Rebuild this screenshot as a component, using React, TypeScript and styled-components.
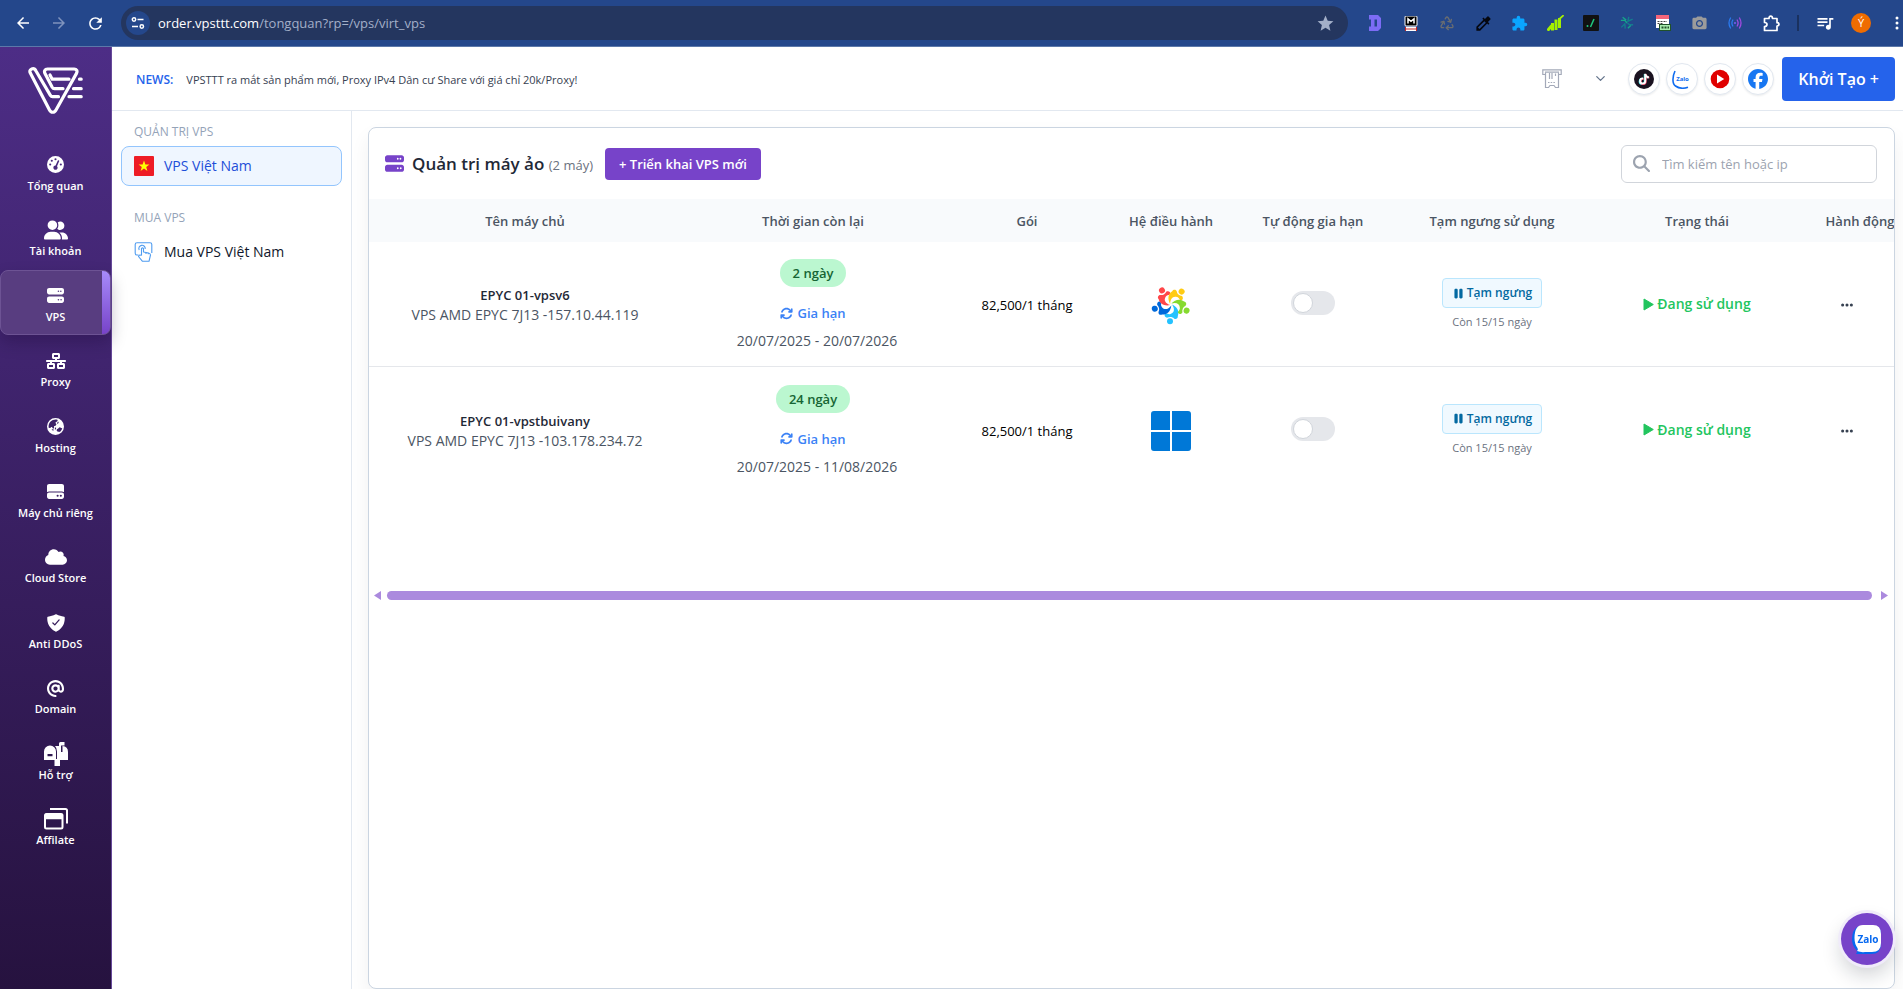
import React from "react";
import styled, { createGlobalStyle, css } from "styled-components";
import {
  FaGaugeHigh,
  FaUserGroup,
  FaServer,
  FaNetworkWired,
  FaEarthAsia,
  FaHardDrive,
  FaCloud,
  FaAt,
  FaArrowsRotate,
  FaPause,
  FaMagnifyingGlass,
  FaFacebook,
  FaTiktok,
  FaEllipsis,
} from "react-icons/fa6";
import { IoShieldCheckmark } from "react-icons/io5";
import {
  MdArrowBack,
  MdArrowForward,
  MdRefresh,
  MdStar,
  MdExtension,
  MdQueueMusic,
  MdPhotoCamera,
  MdColorize,
} from "react-icons/md";
import { LuChevronDown, LuRecycle } from "react-icons/lu";

const GlobalStyle = createGlobalStyle`
  *, *::before, *::after { box-sizing: border-box; }
  body {
    margin: 0;
    background: #fff;
    color: #1f2937;
    font-family: "Open Sans", "Noto Sans", sans-serif;
    font-size: 13px;
    line-height: 20px;
  }
  button, input { font: inherit; color: inherit; }
  button { border: 0; padding: 0; background: none; cursor: pointer; }
  a { color: inherit; text-decoration: none; }
  svg { display: block; flex: none; }
`;

const Page = styled.div`
  min-height: 100vh;
  display: flex;
  flex-direction: column;
`;

/* Browser bar */

const BrowserBar = styled.div`
  height: 47px;
  display: flex;
  align-items: center;
  background: #24478b;
  border-bottom: 1px solid #5c78a9;
  overflow: hidden;
`;

const BrowserButton = styled.button<{ $dim?: boolean }>`
  width: 36px;
  height: 34px;
  flex: none;
  display: grid;
  place-items: center;
  color: ${(p) => (p.$dim ? "#7f93bd" : "#fff")};
`;

const BrowserNav = styled.div`
  display: flex;
  padding: 0 8px 0 5px;
`;

const Omnibox = styled.div`
  flex: 1;
  min-width: 0;
  height: 34px;
  padding: 0 13px 0 5px;
  display: flex;
  align-items: center;
  gap: 8px;
  border-radius: 17px;
  background: #24365f;
  color: #a3afc8;
`;

const SiteInfo = styled.button`
  width: 24px;
  height: 24px;
  display: grid;
  place-items: center;
  border-radius: 50%;
  background: #24478b;
  color: #fff;
`;

const Url = styled.span`
  flex: 1;
  font-size: 13px;
  white-space: nowrap;
  overflow: hidden;
  b {
    font-weight: 400;
    color: #fff;
  }
`;

const Extensions = styled.div`
  display: flex;
  align-items: center;
  padding-left: 9px;
`;

const BarDivider = styled.span`
  width: 2px;
  height: 16px;
  margin: 0 8px;
  background: #1a315f;
`;

const Avatar = styled.span`
  width: 20px;
  height: 20px;
  border-radius: 50%;
  background: #ef6c00;
  color: #fff;
  font-size: 11px;
  line-height: 20px;
  text-align: center;
`;

const MenuDots = styled(BrowserButton)`
  width: 24px;
  padding-right: 4px;
  place-items: center end;
`;

/* Layout */

const Shell = styled.div`
  flex: 1;
  display: flex;
`;

const Sidebar = styled.aside`
  width: 112px;
  flex: none;
  border-right: 1px solid #67499a;
  background: linear-gradient(#4d2d86, #26123f);
`;

const Brand = styled.a`
  height: 92px;
  padding: 20px 0 0 28px;
  display: block;
`;

const PrimaryNav = styled.nav`
  height: 720px;
  display: flex;
  flex-direction: column;
`;

const PrimaryLink = styled.a<{ $active?: boolean }>`
  flex: 1;
  padding-top: 2px;
  display: flex;
  flex-direction: column;
  align-items: center;
  justify-content: center;
  border: 1px solid transparent;
  color: #fff;
  font-size: 11px;
  font-weight: 600;
  line-height: 16px;
  white-space: nowrap;
  ${(p) =>
    p.$active &&
    css`
      border-color: #6d5394;
      border-radius: 8px;
      box-shadow: 0 8px 16px rgba(20, 5, 40, 0.25);
      background: linear-gradient(#a78bfa, #7743c9) right / 8px 100% no-repeat, #583d80;
    `}
`;

const IconSlot = styled.span`
  height: 26px;
  display: grid;
  place-items: center;
`;

const Workspace = styled.div`
  flex: 1;
  min-width: 0;
  display: flex;
  flex-direction: column;
`;

/* Top header */

const TopHeader = styled.header`
  height: 64px;
  padding: 0 8px 0 24px;
  display: flex;
  align-items: center;
  border-bottom: 1px solid #e2e8f0;
`;

const News = styled.p`
  flex: 1;
  margin: 0;
  padding-top: 2px;
  display: flex;
  gap: 13px;
  font-size: 11px;
  color: #374151;
  white-space: nowrap;
  strong {
    font-size: 12px;
    font-weight: 600;
    color: #2563eb;
  }
`;

const HeaderIcon = styled.button`
  width: 48px;
  height: 32px;
  display: grid;
  place-items: center;
  color: #64748b;
`;

const Socials = styled.div`
  display: flex;
  gap: 6px;
  padding: 0 8px 0 4px;
`;

const Social = styled.a`
  width: 32px;
  height: 32px;
  display: grid;
  place-items: center;
  border: 1px solid #e2e8f0;
  border-radius: 50%;
  background: #fff;
  box-shadow: 0 1px 2px rgba(15, 23, 42, 0.08);
`;

const CreateButton = styled.button`
  height: 44px;
  padding: 0 16px;
  border-radius: 4px;
  background: #2563eb;
  color: #fff;
  font-size: 16px;
  font-weight: 600;
  white-space: nowrap;
`;

const Body = styled.div`
  flex: 1;
  display: flex;
`;

/* Secondary menu */

const SubMenu = styled.nav`
  width: 240px;
  flex: none;
  padding: 11px 9px 0;
  display: flex;
  flex-direction: column;
  gap: 22px;
  border-right: 1px solid #e2e8f0;
`;

const SubTitle = styled.h2`
  margin: 0 0 4px;
  padding-left: 13px;
  font-size: 12px;
  font-weight: 400;
  line-height: 20px;
  color: #94a3b8;
`;

const SubLink = styled.a<{ $active?: boolean }>`
  height: 40px;
  padding: 0 12px;
  display: flex;
  align-items: center;
  gap: 10px;
  border: 1px solid ${(p) => (p.$active ? "#93c5fd" : "transparent")};
  border-radius: 8px;
  background: ${(p) => (p.$active ? "#eff6ff" : "transparent")};
  color: ${(p) => (p.$active ? "#1d4ed8" : "#0f172a")};
  font-size: 14px;
`;

/* Machines card */

const Main = styled.main`
  flex: 1;
  min-width: 0;
  padding: 16px 8px 0 16px;
  display: flex;
  overflow: hidden;
`;

const Card = styled.section`
  flex: 1;
  min-width: 0;
  border: 1px solid #cbd5e1;
  border-radius: 8px;
  background: #fff;
  box-shadow: 0 10px 20px rgba(15, 23, 42, 0.06);
  overflow: hidden;
`;

const CardHeader = styled.div`
  height: 71px;
  padding: 0 17px 0 16px;
  display: flex;
  align-items: center;
  gap: 8px;
`;

const CardTitle = styled.h1`
  margin: 0;
  padding-top: 2px;
  font-size: 17px;
  font-weight: 600;
  line-height: 24px;
  color: #1f2937;
  white-space: nowrap;
  small {
    font-size: 13px;
    font-weight: 400;
    color: #6b7280;
  }
`;

const DeployButton = styled.button`
  height: 32px;
  margin: 0 auto 0 4px;
  padding: 0 14px;
  border-radius: 4px;
  background: #7743c9;
  color: #fff;
  font-size: 13px;
  font-weight: 600;
  white-space: nowrap;
`;

const SearchBox = styled.label`
  width: 256px;
  height: 38px;
  padding: 0 11px;
  display: flex;
  align-items: center;
  gap: 12px;
  border: 1px solid #d1d5db;
  border-radius: 6px;
  color: #9ca3af;
  input {
    width: 100%;
    min-width: 0;
    padding: 0;
    border: 0;
    outline: 0;
    background: none;
    color: #1f2937;
    font-size: 13px;
  }
  input::placeholder {
    color: #9ca3af;
    opacity: 1;
  }
`;

const TableScroller = styled.div`
  min-height: 392px;
  overflow: hidden;
`;

const Table = styled.table`
  width: 100%;
  min-width: 1548px;
  table-layout: fixed;
  border-spacing: 0;
  text-align: center;
`;

const HeadCell = styled.th<{ $w: number }>`
  width: ${(p) => p.$w}px;
  height: 43px;
  padding: 0;
  background: #f8fafc;
  color: #4b5563;
  font-weight: 600;
  white-space: nowrap;
`;

const Cell = styled.td`
  padding: 2px 0 0;
  vertical-align: middle;
  white-space: nowrap;
`;

const Row = styled.tr`
  height: 125px;
  &:not(:last-child) > ${Cell} {
    border-bottom: 1px solid #e5e7eb;
  }
`;

const Stack = styled.div`
  display: flex;
  flex-direction: column;
  align-items: center;
`;

const HostName = styled.span`
  font-weight: 600;
  color: #1f2937;
`;

const Muted = styled.span`
  font-size: 14px;
  color: #4b5563;
`;

const DaysPill = styled.span`
  height: 28px;
  padding: 0 13px;
  border-radius: 14px;
  background: #bbf7d0;
  color: #166534;
  font-weight: 600;
  line-height: 28px;
`;

const RenewButton = styled.button`
  margin: 16px 0 8px;
  display: flex;
  align-items: center;
  gap: 4px;
  color: #3b82f6;
  font-weight: 600;
`;

const Period = styled(Muted)`
  padding-left: 8px;
`;

const PlanPrice = styled.span`
  color: #000;
`;

const Centered = styled.div`
  display: flex;
  justify-content: center;
`;

const Switch = styled.input`
  appearance: none;
  width: 44px;
  height: 24px;
  margin: 0 0 4px;
  padding: 2px;
  border-radius: 12px;
  background: #e5e7eb;
  cursor: pointer;
  &::before {
    content: "";
    display: block;
    width: 20px;
    height: 20px;
    border: 1px solid #d1d5db;
    border-radius: 50%;
    background: #fff;
  }
  &:checked {
    background: #7743c9;
  }
  &:checked::before {
    margin-left: auto;
  }
`;

const SuspendButton = styled.button`
  height: 30px;
  margin-bottom: 4px;
  padding: 0 9px;
  display: flex;
  align-items: center;
  gap: 2px;
  border: 1px solid #bae6fd;
  border-radius: 4px;
  background: #f0f9ff;
  color: #0369a1;
  font-size: 12px;
  font-weight: 600;
`;

const Remaining = styled.span`
  font-size: 11px;
  color: #6b7280;
`;

const Status = styled.span`
  display: inline-flex;
  align-items: center;
  gap: 3px;
  color: #22c55e;
  font-size: 14px;
  font-weight: 600;
`;

const ActionButton = styled.button`
  margin-right: 26px;
  padding: 4px;
  color: #374151;
`;

const ScrollRail = styled.div`
  height: 9px;
  padding: 0 6px 0 5px;
  display: flex;
  align-items: center;
  gap: 6px;
  color: #ab8ade;
`;

const ScrollThumb = styled.span`
  flex: 1;
  height: 9px;
  margin-right: 3px;
  border-radius: 5px;
  background: #ab8ade;
`;

const ChatButton = styled.button`
  position: fixed;
  right: 10px;
  bottom: 24px;
  width: 52px;
  height: 52px;
  display: grid;
  place-items: center;
  border-radius: 50%;
  background: #7743c9;
  box-shadow: 0 0 0 3px #f0ebfa, 0 10px 20px rgba(15, 23, 42, 0.2);
`;

/* Drawings */

const BrandMark = () => (
  <svg width="56" height="48" viewBox="0 0 56 48" fill="none" stroke="#fff" strokeWidth="3.200" strokeLinecap="round" strokeLinejoin="round">
    <path d="M30.500 29.700H24.500Q23.200 29.700 22.400 28.400L8 4C6-.2.500 2 2.200 5.800L21.500 43C23 46 26.500 46 28 43L48.500 6.400C49.700 4 48.600 2 46.200 2H19.500C16.800 2 15.800 4.200 17 6.500L24.200 20.300Q25 21.700 26.500 21.700H35" />
    <path d="M22 8L24.200 12.200H41" />
    <path d="M51.500 12.200H53.200M45.500 21.700H53.200M41 29.700H53.200" />
  </svg>
);

const MailboxIcon = () => (
  <svg width="24" height="24" viewBox="0 0 24 24" fill="#fff">
    <path fillRule="evenodd" d="M0 18V9.500A6 6 0 0 1 12 9.500V18ZM3.500 12V14.300H8.500V12Z" />
    <path d="M13 18V9.500Q13 6 11 4H15V1.500Q15 0 16.500 0H20.500V3.500H17V10H18.500V4Q24 4.500 24 10V18Z" />
    <path d="M10.500 17H16V24H10.500Z" />
  </svg>
);

const WindowsStack = () => (
  <svg width="24" height="22" viewBox="0 0 24 22" fill="none" stroke="#fff" strokeWidth="2">
    <path d="M6 1H21.500Q23 1 23 2.500V15.500" />
    <rect x="1" y="6" width="17.500" height="14.500" rx="1.500" />
    <path d="M1 8.500H18.500" strokeWidth="5.500" />
  </svg>
);

const TuneIcon = () => (
  <svg width="14" height="14" viewBox="0 0 14 14" fill="none" stroke="currentColor" strokeWidth="1.500">
    <circle cx="3" cy="3.500" r="1.700" />
    <path d="M6.500 3.500H12.500M1 10.500H7" />
    <circle cx="10.800" cy="10.500" r="1.700" />
  </svg>
);

const LetterD = () => (
  <svg width="12" height="16" viewBox="0 0 12 16">
    <path fill="#7c6cf5" fillRule="evenodd" d="M0 0H9L12 3V13L9 16H0V11.500H2V4.500H0ZM5.500 4.500V11.500H8V4.500Z" />
  </svg>
);

const LetterM = () => (
  <svg width="14" height="15" viewBox="0 0 14 15">
    <rect x="1" width="12" height="10" rx="1" fill="#000" stroke="#fff" />
    <path d="M4 7.500V2.800L7 5.300L10 2.800V7.500" fill="none" stroke="#fff" strokeWidth="1.500" />
    <rect x="1" y="11" width="12" height="4" fill="#fff" />
    <path d="M1.500 11V15M12.500 11V15M1.500 13H12.500" stroke="#c62828" />
  </svg>
);

const GreenBars = () => (
  <svg width="17" height="16" viewBox="0 0 17 16" fill="none" stroke="#a4f000" strokeLinecap="square">
    <path d="M1.500 14.500L4 11.500M5.500 14V9.500M9 13.500V6M12.500 11.500V4.500" strokeWidth="3" />
    <path d="M13 3.500L16 .8" strokeWidth="1.800" />
  </svg>
);

const DotSlash = () => (
  <svg width="16" height="16" viewBox="0 0 16 16">
    <rect width="16" height="16" rx="1" fill="#111" />
    <circle cx="4.500" cy="11" r="1" fill="#1fc77e" />
    <path d="M7.500 12L11 4" stroke="#1fc77e" strokeWidth="1.500" />
  </svg>
);

const Pinwheel = () => (
  <svg width="14" height="14" viewBox="0 0 16 16" fill="none" strokeWidth="1.600">
    <path stroke="#16a58a" d="M3 1.500L7 4.500M1 5H5.500L8 8M9 14L12.500 10.500" />
    <path stroke="#147c8f" d="M10 1L9 6L14.500 3.500M1.500 13L5.500 9L6 14.500M15 10H11L8.500 8" />
  </svg>
);

const CssSheet = () => (
  <svg width="16" height="16" viewBox="0 0 16 16">
    <rect x="1" width="13" height="13" fill="#fff" />
    <rect x="1" width="13" height="4" fill="#f4657a" />
    <path d="M2.500 6.500H12M2.500 8.500H8" stroke="#444" strokeDasharray="2 1" />
    <rect x="4.500" y="9.500" width="11" height="6" fill="#a9ecb0" stroke="#20512a" />
    <path d="M6.500 12.500H14" stroke="#20512a" strokeWidth="2" strokeDasharray="2 1" />
  </svg>
);

const Broadcast = () => (
  <svg width="14" height="12" viewBox="0 0 14 12" fill="none" strokeWidth="1.300" strokeLinecap="round">
    <path stroke="#2b7bf0" d="M2.500 1Q-.5 6 2.500 11M4.800 3Q3 6 4.800 9" />
    <path stroke="#a04be0" d="M11.500 1Q14.500 6 11.500 11M9.200 3Q11 6 9.200 9" />
    <circle cx="7" cy="6" r="1" fill="#7a5cf0" />
  </svg>
);

const PuzzleOutline = () => (
  <svg width="17" height="17" viewBox="0 0 17 17" fill="none" stroke="#fff" strokeWidth="1.700" strokeLinejoin="round">
    <path d="M1.500 3.500H6Q6 1.200 7.700 1.200T9.500 3.500H14V7.700Q16 7.700 16 9.300T14 11V15.500H1.500V11.500Q4 11.500 4 9.500T1.500 7.500Z" />
  </svg>
);

const VerticalDots = () => (
  <svg width="4" height="14" viewBox="0 0 4 14" fill="#fff">
    <circle cx="2" cy="2" r="1.500" />
    <circle cx="2" cy="7" r="1.500" />
    <circle cx="2" cy="12" r="1.500" />
  </svg>
);

const TicketIcon = () => (
  <svg width="20" height="20" viewBox="0 0 20 20" fill="none" stroke="#a3a9b8" strokeWidth="1.200">
    <path d="M3 5.500H.8V.8H19.200V5.500H17M3 3.200H17" />
    <path d="M3.500 3.500V18.500H6.500L8 16.500H12L13.500 18.500H16.500V3.500" />
    <path d="M7.500 4V10M10 4V10M13.500 4.500V7" />
    <path d="M6 13.500H14" strokeDasharray="1.500 1.200" />
  </svg>
);

const FlagIcon = () => (
  <svg width="20" height="20" viewBox="0 0 20 20">
    <rect width="20" height="20" rx="1" fill="#ee1c25" />
    <path fill="#ff0" d="M10 4.600L11.400 8.500H15.400L12.200 11L13.400 15L10 12.600L6.600 15L7.800 11L4.600 8.500H8.600Z" />
  </svg>
);

const TapIcon = () => (
  <svg width="20" height="20" viewBox="0 0 20 20" fill="none" stroke="#4f9cf0" strokeWidth="1.100" strokeLinejoin="round">
    <path d="M4.500 13H3Q1.200 13 1.200 11.200V2.500Q1.200 .8 3 .8H16Q17.800 .8 17.800 2.500V11" />
    <path d="M5.200 8A3.200 3.200 0 1 1 11.200 7" />
    <path d="M7.500 13.500V6.500Q8.500 5.200 9.500 6.500V10L14.500 11Q16.500 11.500 16.500 13L15 19.300H8.500L4.500 14.500Q5.500 12 7.500 13.500" />
    <path d="M12 10.500V12M14.300 11V12.300" />
  </svg>
);

const PlayIcon = () => (
  <svg width="11" height="13" viewBox="0 0 11 13" fill="currentColor" stroke="currentColor" strokeLinejoin="round">
    <path d="M1 1L10.300 6.500L1 12Z" />
  </svg>
);

const TikTokMark = () => (
  <svg width="20" height="20" viewBox="0 0 20 20">
    <circle cx="10" cy="10" r="10" fill="#1a1220" />
    <g transform="translate(4 5)">
      <FaTiktok size={11} color="#25f4ee" />
    </g>
    <g transform="translate(5 5)">
      <FaTiktok size={11} color="#fe5577" />
    </g>
    <g transform="translate(4.500 4.500)">
      <FaTiktok size={11} color="#fff" />
    </g>
  </svg>
);

const ZaloMark = () => (
  <svg width="20" height="20" viewBox="0 0 20 20">
    <path d="M3 2C.6 7-.2 14.500 3.500 17C7 19.500 12 19.600 16 18.200" fill="none" stroke="#0f6cf0" strokeWidth="1.600" />
    <text x="10.500" y="12" fontSize="6" fontWeight="700" textAnchor="middle" fill="#0f6cf0">Zalo</text>
  </svg>
);

const YouTubeMark = () => (
  <svg width="20" height="20" viewBox="0 0 20 20">
    <circle cx="10" cy="10" r="9.300" fill="#e00000" />
    <path d="M7 5.500L14.200 10L7 14.500Z" fill="#fff" />
  </svg>
);

const ZaloBubble = () => (
  <svg width="32" height="32" viewBox="0 0 32 32">
    <path d="M8 3H22Q30 3 30 11V21Q30 31 20 31H5Q7 29 5.500 27Q1 23 1 16Q1 6 8 3Z" fill="#0668f0" />
    <path d="M12 2H22Q30 2 30 11V20Q30 29 21 29H14Q10 29.500 6 28Q7.500 27 6.500 25Q3.500 21 3.500 15Q3.500 2 12 2Z" fill="#fff" />
    <text x="17" y="20" fontSize="10" fontWeight="700" textAnchor="middle" fill="#0668f0">Zalo</text>
  </svg>
);

const AlmaMark = () => (
  <svg width="40" height="40" viewBox="-20 -19.500 40 40" role="img" aria-label="AlmaLinux">
    {["#24c2ff", "#0069da", "#ff4649", "#ffcb12", "#86da2f"].map((color, i) => (
      <g key={color} fill={color} transform={`rotate(${i * 72})`}>
        <circle cx="-1" cy="16.700" r="3" />
        <path d="M1 0C6.500 2.500 8.600 7 6.800 11.500C7.200 14 4.500 15.300 3 14C1.500 12.200 -1.500 12 -4 13.300C-6.500 12.500 -7 10.500 -5.800 9.200C-4 8.300 -3 10.300 -.5 9.500C3.800 8 3.800 4 1 0Z" />
      </g>
    ))}
  </svg>
);

const WindowsMark = () => (
  <svg width="40" height="40" viewBox="0 0 40 40" fill="#0078d7" role="img" aria-label="Windows">
    <path d="M3 0H19V19H0V3Q0 0 3 0ZM21 0H37Q40 0 40 3V19H21ZM0 21H19V40H3Q0 40 0 37ZM21 21H40V37Q40 40 37 40H21Z" />
  </svg>
);

const Arrow = ({ d }: { d: string }) => (
  <svg width="7" height="9" viewBox="0 0 7 9" fill="currentColor">
    <path d={d} />
  </svg>
);

/* Data */

const navItems = [
  { label: "Tổng quan", icon: <FaGaugeHigh size={17} /> },
  { label: "Tài khoản", icon: <FaUserGroup size={24} /> },
  { label: "VPS", icon: <FaServer size={17} />, active: true },
  { label: "Proxy", icon: <FaNetworkWired size={20} /> },
  { label: "Hosting", icon: <FaEarthAsia size={17} /> },
  { label: "Máy chủ riêng", icon: <FaHardDrive size={17} /> },
  { label: "Cloud Store", icon: <FaCloud size={22} /> },
  { label: "Anti DDoS", icon: <IoShieldCheckmark size={20} /> },
  { label: "Domain", icon: <FaAt size={17} /> },
  { label: "Hỗ trợ", icon: <MailboxIcon /> },
  { label: "Affilate", icon: <WindowsStack /> },
];

const extensions = [
  { name: "D", icon: <LetterD /> },
  { name: "M", icon: <LetterM /> },
  { name: "Recycle", icon: <LuRecycle size={16} color="#6b6d70" /> },
  { name: "Color picker", icon: <MdColorize size={19} color="#05070f" /> },
  { name: "Puzzle", icon: <MdExtension size={17} color="#0aa5ff" /> },
  { name: "Bars", icon: <GreenBars /> },
  { name: "Terminal", icon: <DotSlash /> },
  { name: "Pinwheel", icon: <Pinwheel /> },
  { name: "CSS", icon: <CssSheet /> },
  { name: "Camera", icon: <MdPhotoCamera size={17} color="#9b9b9b" /> },
  { name: "Broadcast", icon: <Broadcast /> },
  { name: "Extensions", icon: <PuzzleOutline /> },
];

const columns: [string, number][] = [
  ["Tên máy chủ", 312],
  ["Thời gian còn lại", 264],
  ["Gói", 164],
  ["Hệ điều hành", 124],
  ["Tự động gia hạn", 160],
  ["Tạm ngưng sử dụng", 198],
  ["Trạng thái", 212],
  ["Hành động", 114],
];

const machines = [
  {
    name: "EPYC 01-vpsv6",
    spec: "VPS AMD EPYC 7J13 -157.10.44.119",
    days: "2 ngày",
    period: "20/07/2025 - 20/07/2026",
    os: <AlmaMark />,
  },
  {
    name: "EPYC 01-vpstbuivany",
    spec: "VPS AMD EPYC 7J13 -103.178.234.72",
    days: "24 ngày",
    period: "20/07/2025 - 11/08/2026",
    os: <WindowsMark />,
  },
];

export default function App() {
  return (
    <Page>
      <GlobalStyle />
      <BrowserBar>
        <BrowserNav>
          <BrowserButton aria-label="Back"><MdArrowBack size={18} /></BrowserButton>
          <BrowserButton aria-label="Forward" $dim><MdArrowForward size={18} /></BrowserButton>
          <BrowserButton aria-label="Reload"><MdRefresh size={19} /></BrowserButton>
        </BrowserNav>
        <Omnibox>
          <SiteInfo aria-label="Site information"><TuneIcon /></SiteInfo>
          <Url><b>order.vpsttt.com</b>/tongquan?rp=/vps/virt_vps</Url>
          <MdStar size={19} />
        </Omnibox>
        <Extensions>
          {extensions.map((e) => (
            <BrowserButton key={e.name} aria-label={e.name}>{e.icon}</BrowserButton>
          ))}
          <BarDivider />
          <BrowserButton aria-label="Media"><MdQueueMusic size={20} /></BrowserButton>
          <BrowserButton aria-label="Profile"><Avatar>Ý</Avatar></BrowserButton>
          <MenuDots aria-label="Menu"><VerticalDots /></MenuDots>
        </Extensions>
      </BrowserBar>

      <Shell>
        <Sidebar>
          <Brand href="#" aria-label="VPSTTT"><BrandMark /></Brand>
          <PrimaryNav>
            {navItems.map((item) => (
              <PrimaryLink key={item.label} href="#" $active={item.active}>
                <IconSlot>{item.icon}</IconSlot>
                {item.label}
              </PrimaryLink>
            ))}
          </PrimaryNav>
        </Sidebar>

        <Workspace>
          <TopHeader>
            <News>
              <strong>NEWS:</strong>
              <span>VPSTTT ra mắt sản phẩm mới, Proxy IPv4 Dân cư Share với giá chỉ 20k/Proxy!</span>
            </News>
            <HeaderIcon aria-label="Ticket"><TicketIcon /></HeaderIcon>
            <HeaderIcon aria-label="More"><LuChevronDown size={15} /></HeaderIcon>
            <Socials>
              <Social href="#" aria-label="TikTok"><TikTokMark /></Social>
              <Social href="#" aria-label="Zalo"><ZaloMark /></Social>
              <Social href="#" aria-label="YouTube"><YouTubeMark /></Social>
              <Social href="#" aria-label="Facebook"><FaFacebook size={20} color="#1877f2" /></Social>
            </Socials>
            <CreateButton>Khởi Tạo +</CreateButton>
          </TopHeader>

          <Body>
            <SubMenu>
              <div>
                <SubTitle>QUẢN TRỊ VPS</SubTitle>
                <SubLink href="#" $active><FlagIcon />VPS Việt Nam</SubLink>
              </div>
              <div>
                <SubTitle>MUA VPS</SubTitle>
                <SubLink href="#"><TapIcon />Mua VPS Việt Nam</SubLink>
              </div>
            </SubMenu>

            <Main>
              <Card>
                <CardHeader>
                  <FaServer size={19} color="#7743c9" />
                  <CardTitle>Quản trị máy ảo <small>(2 máy)</small></CardTitle>
                  <DeployButton>+ Triển khai VPS mới</DeployButton>
                  <SearchBox>
                    <FaMagnifyingGlass size={17} />
                    <input type="text" placeholder="Tìm kiếm tên hoặc ip" aria-label="Tìm kiếm tên hoặc ip" />
                  </SearchBox>
                </CardHeader>

                <TableScroller>
                  <Table>
                    <thead>
                      <tr>
                        {columns.map(([label, width]) => (
                          <HeadCell key={label} $w={width} scope="col">{label}</HeadCell>
                        ))}
                      </tr>
                    </thead>
                    <tbody>
                      {machines.map((m) => (
                        <Row key={m.name}>
                          <Cell>
                            <Stack>
                              <HostName>{m.name}</HostName>
                              <Muted>{m.spec}</Muted>
                            </Stack>
                          </Cell>
                          <Cell>
                            <Stack>
                              <DaysPill>{m.days}</DaysPill>
                              <RenewButton><FaArrowsRotate size={13} />Gia hạn</RenewButton>
                              <Period>{m.period}</Period>
                            </Stack>
                          </Cell>
                          <Cell><PlanPrice>82,500/1 tháng</PlanPrice></Cell>
                          <Cell><Centered>{m.os}</Centered></Cell>
                          <Cell>
                            <Centered>
                              <Switch type="checkbox" role="switch" aria-label={`Tự động gia hạn ${m.name}`} />
                            </Centered>
                          </Cell>
                          <Cell>
                            <Stack>
                              <SuspendButton><FaPause size={13} />Tạm ngưng</SuspendButton>
                              <Remaining>Còn 15/15 ngày</Remaining>
                            </Stack>
                          </Cell>
                          <Cell><Status><PlayIcon />Đang sử dụng</Status></Cell>
                          <Cell>
                            <Centered>
                              <ActionButton aria-label={`Hành động ${m.name}`}><FaEllipsis size={14} /></ActionButton>
                            </Centered>
                          </Cell>
                        </Row>
                      ))}
                    </tbody>
                  </Table>
                </TableScroller>
                <ScrollRail>
                  <Arrow d="M7 0V9L0 4.500Z" />
                  <ScrollThumb />
                  <Arrow d="M0 0V9L7 4.500Z" />
                </ScrollRail>
              </Card>
            </Main>
          </Body>
        </Workspace>
      </Shell>

      <ChatButton aria-label="Zalo"><ZaloBubble /></ChatButton>
    </Page>
  );
}
